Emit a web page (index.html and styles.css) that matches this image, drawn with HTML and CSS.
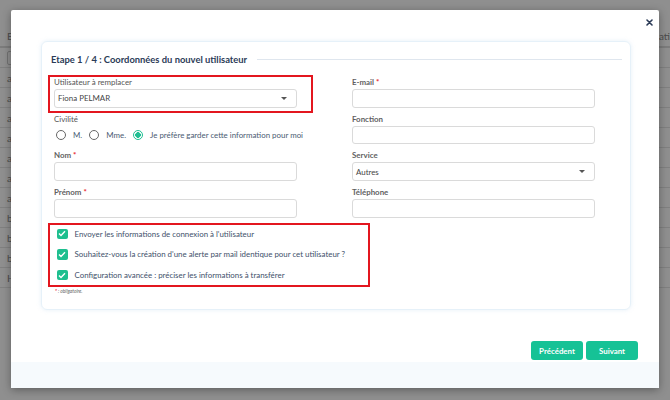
FILE: index.html
```html
<!DOCTYPE html>
<html lang="fr">
<head>
<meta charset="utf-8">
<link rel="stylesheet" href="styles.css">
</head>
<body>
<div class="page">
  <div class="bg-row bg-head"><span class="bg-l">E</span><span class="bg-r">ati</span></div>
  <div class="bg-row"><span class="bg-l bg-box"></span></div>
  <div class="bg-row"><span class="bg-l">a</span></div>
  <div class="bg-row"><span class="bg-l">a</span></div>
  <div class="bg-row"><span class="bg-l">a</span></div>
  <div class="bg-row"><span class="bg-l">a</span></div>
  <div class="bg-row"><span class="bg-l">a</span></div>
  <div class="bg-row"><span class="bg-l">a</span></div>
  <div class="bg-row"><span class="bg-l">a</span></div>
  <div class="bg-row"><span class="bg-l">b</span></div>
  <div class="bg-row"><span class="bg-l">b</span></div>
  <div class="bg-row"><span class="bg-l">b</span></div>
  <div class="bg-row"><span class="bg-l">H</span></div>
</div>
<div class="overlay"></div>
<div class="modal">
  <div class="close">
    <svg width="7" height="7" viewBox="0 0 7 7"><path d="M1 1L6 6M6 1L1 6" stroke="#2b3b57" stroke-width="1.6" stroke-linecap="round"/></svg>
  </div>
  <div class="modal-body">
    <div class="card">
      <div class="title-row">
        <h2 class="title">Etape 1 / 4 : Coordonnées du nouvel utilisateur</h2>
        <div class="title-line"></div>
      </div>
      <div class="grid">
        <div class="col">
          <div class="field">
            <label class="lbl lbl-light">Utilisateur à remplacer</label>
            <div class="input select"><span>Fiona PELMAR</span><i class="caret"></i></div>
          </div>
          <div class="field">
            <label class="lbl lbl-light">Civilité</label>
            <div class="radios">
              <span class="radio"></span><span class="rtext">M.</span>
              <span class="radio"></span><span class="rtext">Mme.</span>
              <span class="radio on"></span><span class="rtext">Je préfère garder cette information pour moi</span>
            </div>
          </div>
          <div class="field">
            <label class="lbl">Nom <b class="req">*</b></label>
            <div class="input"></div>
          </div>
          <div class="field">
            <label class="lbl">Prénom <b class="req">*</b></label>
            <div class="input"></div>
          </div>
        </div>
        <div class="col">
          <div class="field">
            <label class="lbl">E-mail <b class="req">*</b></label>
            <div class="input"></div>
          </div>
          <div class="field">
            <label class="lbl">Fonction</label>
            <div class="input"></div>
          </div>
          <div class="field">
            <label class="lbl">Service</label>
            <div class="input select"><span>Autres</span><i class="caret"></i></div>
          </div>
          <div class="field">
            <label class="lbl">Téléphone</label>
            <div class="input"></div>
          </div>
        </div>
      </div>
      <div class="checks">
        <div class="check"><span class="box"><svg width="8" height="7" viewBox="0 0 8 7"><path d="M1 3.6L3 5.5L7 1.3" fill="none" stroke="#fff" stroke-width="1.4"/></svg></span><span>Envoyer les informations de connexion à l'utilisateur</span></div>
        <div class="check"><span class="box"><svg width="8" height="7" viewBox="0 0 8 7"><path d="M1 3.6L3 5.5L7 1.3" fill="none" stroke="#fff" stroke-width="1.4"/></svg></span><span>Souhaitez-vous la création d'une alerte par mail identique pour cet utilisateur ?</span></div>
        <div class="check"><span class="box"><svg width="8" height="7" viewBox="0 0 8 7"><path d="M1 3.6L3 5.5L7 1.3" fill="none" stroke="#fff" stroke-width="1.4"/></svg></span><span>Configuration avancée : préciser les informations à transférer</span></div>
      </div>
      <p class="note"><b class="req">*</b> : obligatoire.</p>
      <div class="mark mark1"></div>
      <div class="mark mark2"></div>
    </div>
    <div class="actions">
      <button class="btn">Précédent</button>
      <button class="btn">Suivant</button>
    </div>
  </div>
  <div class="modal-foot"></div>
</div>
</body>
</html>
```
FILE: styles.css
```css
* { box-sizing: border-box; }
html, body { margin: 0; padding: 0; }
body {
  width: 670px;
  height: 400px;
  overflow: hidden;
  position: relative;
  background: #fff;
  font-family: Lato, "Noto Sans", sans-serif;
}
.page { padding-top: 26px; }
.bg-row {
  height: 20px;
  border-bottom: 1px solid #e4e4e4;
  display: flex;
  justify-content: space-between;
  align-items: center;
  font-size: 10px;
  color: #888;
}
.bg-head { height: 22px; border-bottom: 2px solid #ddd; }
.bg-l { margin-left: 7px; }
.bg-r { margin-right: 0; }
.bg-box { width: 12px; height: 14px; border: 1px solid #ccc; border-radius: 2px; }
.overlay {
  position: absolute;
  inset: 0;
  background: rgba(0, 0, 0, 0.44);
}
.modal {
  position: absolute;
  left: 11px;
  top: 10px;
  width: 648px;
  height: 378px;
  background: #fff;
  border-radius: 2px;
  box-shadow: 0 2px 8px rgba(0,0,0,0.35);
  display: flex;
  flex-direction: column;
}
.close {
  position: absolute;
  right: 6px;
  top: 9px;
  width: 7px;
  height: 7px;
  display: flex;
}
.modal-body {
  flex: 1;
  padding: 31px 28px 0 30px;
  display: flex;
  flex-direction: column;
}
.modal-foot {
  height: 26px;
  background: #f6fafd;
}
.card {
  position: relative;
  height: 269px;
  border: 1px solid #e6f1f9;
  border-radius: 6px;
  box-shadow: 0 0 4px rgba(180, 210, 235, 0.35);
  padding: 11px 8px 0 9px;
}
.title-row {
  display: flex;
  align-items: center;
  height: 13px;
}
.title {
  margin: 0;
  font-size: 9.4px;
  font-weight: 700;
  color: #2b3b57;
  white-space: nowrap;
}
.title-line {
  flex: 1;
  height: 1px;
  background: #dfe6ee;
  margin-left: 10px;
}
.grid {
  display: grid;
  grid-template-columns: 243px 243px;
  column-gap: 55px;
  margin: 11px 0 0 3px;
}
.col {
  display: grid;
  grid-template-columns: minmax(0, 1fr);
  grid-template-rows: repeat(4, 36.7px);
  min-width: 0;
}
.field { display: flex; flex-direction: column; min-width: 0; }
.lbl {
  display: block;
  font-size: 7.9px;
  line-height: 10px;
  height: 10px;
  margin-bottom: 2px;
  font-weight: 700;
  color: #5f5f5f;
}
.lbl-light { font-weight: 400; color: #555; }
.req { color: #e8252d; font-weight: 700; }
.input {
  height: 18.5px;
  border: 1px solid #dadada;
  border-radius: 3px;
  background: #fff;
}
.select {
  display: flex;
  align-items: center;
  justify-content: space-between;
  padding: 0 9px 0 3px;
  font-size: 7.9px;
  color: #444;
}
.caret {
  width: 0;
  height: 0;
  border-left: 3px solid transparent;
  border-right: 3px solid transparent;
  border-top: 3.5px solid #555;
}
.radios {
  display: flex;
  align-items: center;
  height: 18px;
  padding-left: 2px;
  padding-top: 0;
}
.radio {
  width: 10px;
  height: 10px;
  border: 1px solid #666;
  border-radius: 50%;
  margin-right: 7px;
  flex: none;
}
.radio.on {
  border-color: #1fbf93;
  background: radial-gradient(circle, #1fbf93 0 2.6px, #fff 3px);
}
.rtext {
  font-size: 7.9px;
  color: #4a5a72;
  margin-right: 7px;
  white-space: nowrap;
}
.checks {
  margin: 5px 0 0 6px;
  display: flex;
  flex-direction: column;
  gap: 10.3px;
}
.check {
  display: flex;
  align-items: center;
  height: 10.3px;
  font-size: 7.9px;
  color: #3e4f6a;
  white-space: nowrap;
}
.box {
  width: 10.5px;
  height: 10.5px;
  border-radius: 2px;
  background: #1ebf8f;
  display: flex;
  align-items: center;
  justify-content: center;
  margin-right: 7px;
  flex: none;
}
.note {
  margin: 8px 0 0 4px;
  font-size: 4.8px;
  font-style: italic;
  color: #666;
}
.mark {
  position: absolute;
  border: 2px solid #e3161f;
  pointer-events: none;
}
.mark1 { left: 6px; top: 33px; width: 265px; height: 38px; }
.mark2 { left: 6px; top: 181px; width: 322px; height: 64px; }
.actions {
  display: flex;
  justify-content: flex-end;
  gap: 3px;
  margin-top: 31px;
  margin-right: -7px;
}
.btn {
  width: 52px;
  height: 19px;
  border: none;
  border-radius: 3px;
  background: #16c296;
  color: #fff;
  font-family: Lato, "Noto Sans", sans-serif;
  font-size: 7.9px;
  font-weight: 700;
  padding: 0;
}
```
